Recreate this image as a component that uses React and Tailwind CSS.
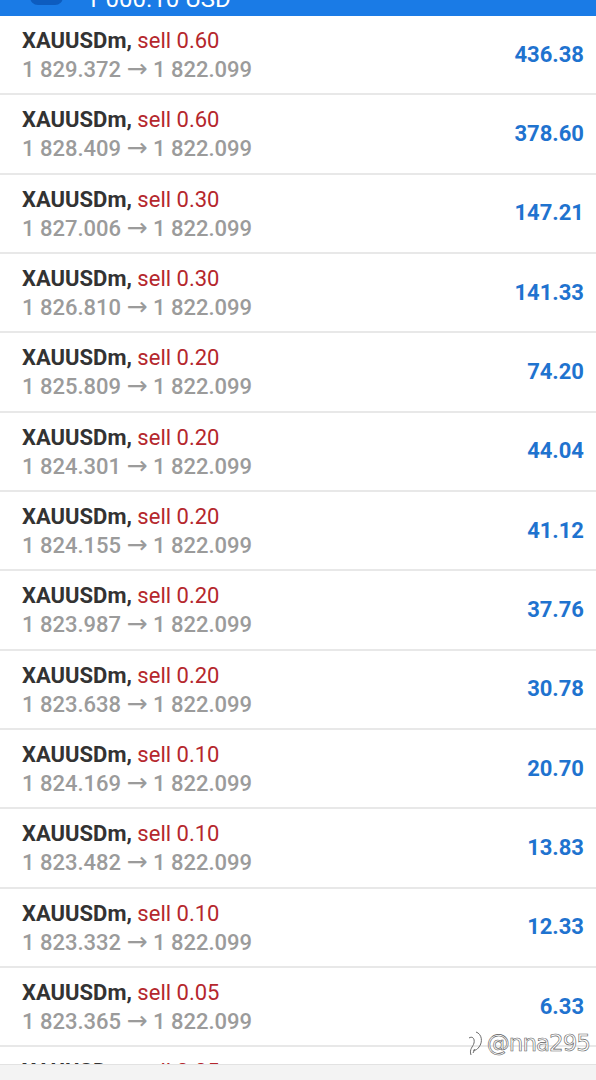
import React from 'react'

const ROWS = [
  { lot: '0.60', open: '1 829.372', profit: '436.38' },
  { lot: '0.60', open: '1 828.409', profit: '378.60' },
  { lot: '0.30', open: '1 827.006', profit: '147.21' },
  { lot: '0.30', open: '1 826.810', profit: '141.33' },
  { lot: '0.20', open: '1 825.809', profit: '74.20' },
  { lot: '0.20', open: '1 824.301', profit: '44.04' },
  { lot: '0.20', open: '1 824.155', profit: '41.12' },
  { lot: '0.20', open: '1 823.987', profit: '37.76' },
  { lot: '0.20', open: '1 823.638', profit: '30.78' },
  { lot: '0.10', open: '1 824.169', profit: '20.70' },
  { lot: '0.10', open: '1 823.482', profit: '13.83' },
  { lot: '0.10', open: '1 823.332', profit: '12.33' },
  { lot: '0.05', open: '1 823.365', profit: '6.33' },
]

export default function App() {
  return (
    <div className="relative w-[596px] h-[1080px] overflow-hidden bg-white font-['Roboto',sans-serif]">
      {/* ── Cabecera (casi fuera de pantalla) ── */}
      <div className="h-[16px] overflow-hidden bg-[#1a7be6]">
        <div className="flex items-start gap-[23px] pl-[30px] -mt-[16px] h-[30px]">
          <div className="w-[33px] h-[21px] rounded-[8px] bg-[#0d5cbf]" />
          <p className="text-[24px] leading-[30px] text-white">1 000.10 USD</p>
        </div>
      </div>

      {/* ── Posiciones ── */}
      {ROWS.map((r, i) => (
        <PositionRow key={i} {...r} />
      ))}

      {/* ── Fila cortada ── */}
      <div className="h-[17px] overflow-hidden pl-[22px]">
        <p className="text-[22px] leading-[29px] pt-[10px] text-[#333] font-bold">
          XAUUSDm, <span className="font-normal text-[#b5272d]">sell 0.05</span>
        </p>
      </div>

      {/* ── Barra inferior ── */}
      <div className="h-[16px] bg-[#f3f3f3] border-t border-[#e2e2e2]" />

      {/* marca de agua */}
      <div className="absolute right-[6px] top-[1029px] flex items-center gap-[2px] text-[23px] leading-[28px] font-normal text-white [-webkit-text-stroke:0.6px_#5e5e5e] font-['DejaVu_Sans',sans-serif] tracking-[-1px]">
        <svg width="20" height="28" viewBox="0 0 20 28" fill="none" stroke="#6b6b6b" strokeWidth="1">
          <path d="M6 26 C4 20 8 18 9 14 C10 9 7 7 4 9" />
          <path d="M11 3 C17 5 18 13 14 18 C12 21 9 22 8 21" />
          <path d="M8 24 L10 20" />
        </svg>
        <span>@nna295</span>
      </div>
    </div>
  )
}

function PositionRow({ lot, open, profit }) {
  return (
    <div className="h-[79.33px] flex items-center justify-between pl-[22px] pr-[12px] border-b-2 border-[#e8e8e8]">
      <div className="pt-[1px]">
        <p className="text-[22px] leading-[29px] font-bold text-[#333]">
          XAUUSDm, <span className="font-normal text-[#b5272d]">sell {lot}</span>
        </p>
        <p className="text-[22px] leading-[29px] font-medium text-[#9b9b9b]">
          {open} <span className="font-['DejaVu_Sans',sans-serif] font-normal text-[25px] leading-none">→</span> 1 822.099
        </p>
      </div>
      <p className="text-[22px] leading-[29px] font-bold text-[#1f73cf] pb-[1px]">{profit}</p>
    </div>
  )
}
